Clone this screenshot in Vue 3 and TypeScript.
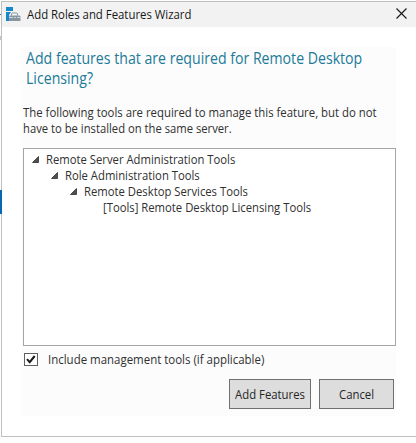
<script setup lang="ts">
import { ref } from 'vue'

interface TreeRow {
  label: string
  level: number
  leaf?: boolean
}

const rows: TreeRow[] = [
  { label: 'Remote Server Administration Tools', level: 0 },
  { label: 'Role Administration Tools', level: 1 },
  { label: 'Remote Desktop Services Tools', level: 2 },
  { label: '[Tools] Remote Desktop Licensing Tools', level: 3, leaf: true },
]
const includeTools = ref(true)
</script>

<template>
  <div class="screen">
    <div class="behind">
      <i class="tick"></i>
      <i class="tick grey"></i>
      <i class="selection"></i>
    </div>
    <section class="dialog">
      <header class="titlebar">
        <svg class="app-icon" width="15" height="16" viewBox="0 0 15 16">
          <path d="M0 1h7v4H0zM0 6h5L3 9v6H0z" fill="#1687c9" />
          <path d="M5.5 9.5V8q0-1 1-1h4q1 0 1 1v1.5" fill="none" stroke="#8795a1" />
          <path d="M4 9.5h9.5l1 1V15H3v-4.5z" fill="#8795a1" />
          <path d="M3 11.5h4M8 11.5h2M11 11.5h3.5" stroke="#dfe6ea" stroke-width=".8" />
        </svg>
        <span class="title">Add Roles and Features Wizard</span>
        <svg class="close" width="11" height="11" viewBox="0 0 11 11">
          <path d="M.5.5l10 10M10.5.5l-10 10" fill="none" stroke="#1c1c1c" stroke-width="1.15" />
        </svg>
      </header>
      <main class="content">
        <h1>Add features that are required for Remote Desktop<br />Licensing?</h1>
        <p>
          <span class="first">The following tools are required to manage this feature, but do not</span>
          <span class="second">have to be installed on the same server.</span>
        </p>
        <div class="tree">
          <div v-for="row in rows" :key="row.label" class="row" :class="'level-' + row.level">
            <svg v-if="!row.leaf" class="arrow" width="7" height="7" viewBox="0 0 7 7">
              <path d="M6.5.5v6h-6z" fill="#505050" stroke="#303030" stroke-width=".8" />
            </svg>
            <span class="label">{{ row.label }}</span>
          </div>
        </div>
        <div class="option" @click="includeTools = !includeTools">
          <span class="box">
            <svg v-if="includeTools" width="12" height="11" viewBox="0 0 12 11">
              <path d="M2 5.2l2.7 3L9.7 2" fill="none" stroke="#1a1a1a" stroke-width="2" />
            </svg>
          </span>
          <span class="option-label">Include management tools (if applicable)</span>
        </div>
        <div class="actions">
          <button class="add"><span>Add Features</span></button>
          <button class="cancel"><span>Cancel</span></button>
        </div>
      </main>
    </section>
  </div>
</template>

<style>
body { margin: 0; overflow: hidden; }
</style>
<style scoped>
* { box-sizing: border-box; }
.screen {
  position: relative;
  width: 416px;
  height: 443px;
  padding: 1px 0 0 1px;
  overflow: hidden;
  background: #fdfdfd;
  font-family: "Open Sans", "Noto Sans", sans-serif;
  font-size: 12px;
  color: #303030;
  white-space: nowrap;
}
.behind { position: absolute; left: 0; top: 0; width: 2px; height: 443px; z-index: 1; }
.tick { position: absolute; left: 0; top: 14px; width: 1px; height: 1px; background: #277b9c; }
.tick.grey { top: 36px; height: 4px; background: #c4c4c4; }
.selection { position: absolute; left: 0; top: 190px; width: 2px; height: 24px; background: #0867ae; }
.dialog {
  width: 415px;
  height: 436px;
  border: solid #bfc1c1;
  border-width: 1px 0 1px 1px;
  background: #fff;
}
.titlebar {
  display: flex;
  height: 25px;
  padding-left: 4px;
  background: #f2f2f2;
  color: #181818;
}
.app-icon { margin-top: 4px; }
.title { margin-left: 6px; line-height: 26px; transform: scaleX(.948); transform-origin: left; }
.close { margin: 6px 9px 0 auto; }
.content {
  display: flex;
  flex-direction: column;
  width: 374px;
  height: 369px;
  margin: 20px 0 0 20px;
  padding-left: 1px;
  background: #fcfcfc;
}
h1 {
  height: 40px;
  margin: 1px 0 0 3px;
  font-size: 15.5px;
  font-weight: 400;
  line-height: 20px;
  color: #217a98;
  transform: scaleX(.911);
  transform-origin: left;
}
p { height: 34px; margin: 17px 0 0; line-height: 16px; }
p span { display: block; transform-origin: left; }
.first { transform: scaleX(.948); }
.second { transform: scaleX(.937); }
.tree {
  width: 373px;
  height: 198px;
  margin-top: 9px;
  padding-top: 3px;
  border: 1px solid #a4a7a9;
  background: #fff;
}
.row { display: flex; height: 16px; line-height: 16px; }
.label { transform: scaleX(.94); transform-origin: left; }
.level-0 { padding-left: 8px; }
.level-1 { padding-left: 27px; }
.level-2 { padding-left: 46px; }
.level-3 { padding-left: 79px; }
.arrow { margin: 4px 7px 0 0; }
.option { display: flex; align-items: center; height: 16px; margin-top: 5px; padding-left: 1px; }
.option-label { transform: scaleX(.955); transform-origin: left; }
.box { display: flex; width: 14px; height: 13px; margin-right: 10px; border: 1px solid #606060; background: #fff; }
.actions { display: flex; gap: 8px; margin: 12px 0 0 206px; }
button {
  height: 30px;
  padding: 0;
  border: 1px solid #707070;
  border-radius: 0;
  background: #ddd;
  color: #252525;
  font: inherit;
}
button span { display: inline-block; transform: scaleX(.945); }
.add { width: 82px; }
.add span { margin: 0 -2px; }
.cancel { width: 75px; }
</style>
